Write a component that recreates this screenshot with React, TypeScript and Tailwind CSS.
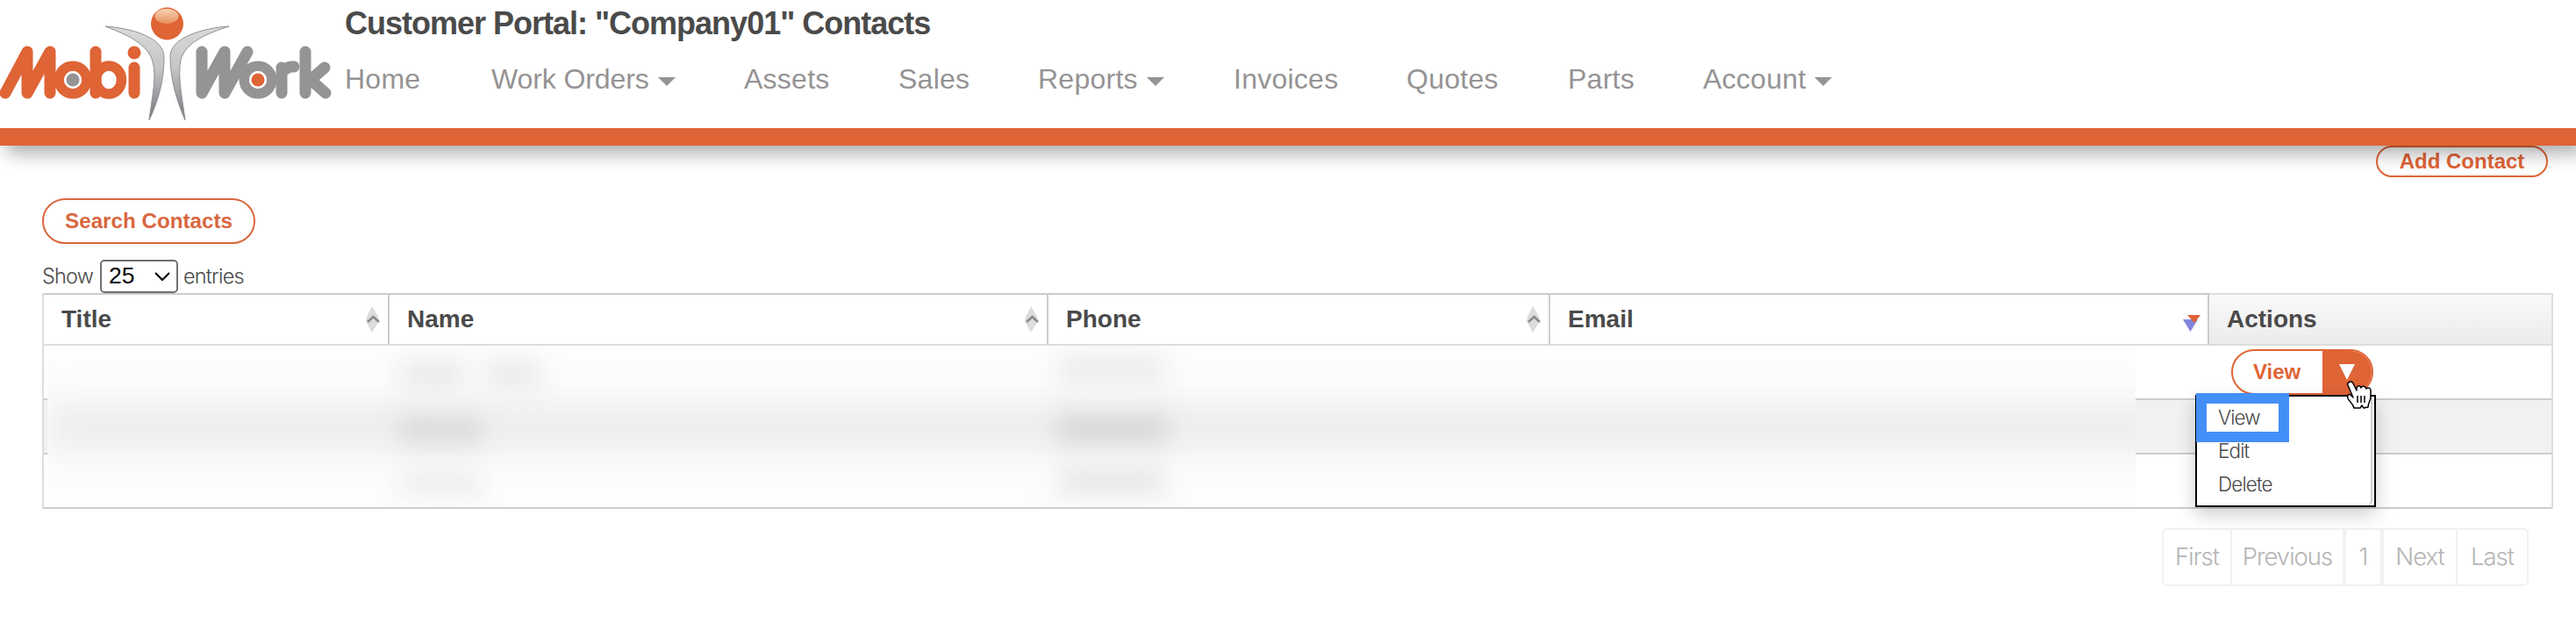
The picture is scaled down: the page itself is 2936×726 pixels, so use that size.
import React from 'react';

interface NavItem {
    label: string;
    width: string;
    menu?: boolean;
}

const navItems: NavItem[] = [
    { label: 'Home', width: 'w-[167px]' },
    { label: 'Work Orders', width: 'w-[288px] tracking-[-0.1px]', menu: true },
    { label: 'Assets', width: 'w-[176px]' },
    { label: 'Sales', width: 'w-[159px]' },
    { label: 'Reports', width: 'w-[223px]', menu: true },
    { label: 'Invoices', width: 'w-[197px]' },
    { label: 'Quotes', width: 'w-[184px]' },
    { label: 'Parts', width: 'w-[154px]' },
    { label: 'Account', width: 'w-[160px]', menu: true },
];

const Logo: React.FC = () => (
    <svg width="393" height="146" viewBox="0 0 393 146" className="shrink-0">
        <defs>
            <linearGradient id="wing" x1="0" y1="0" x2="0" y2="1">
                <stop offset="0" stopColor="#d9dadb" />
                <stop offset="0.45" stopColor="#c4c5c7" />
                <stop offset="1" stopColor="#77787b" />
            </linearGradient>
            <linearGradient id="shine" x1="0" y1="0" x2="0" y2="1">
                <stop offset="0" stopColor="#f6d3b4" />
                <stop offset="1" stopColor="#e9905f" />
            </linearGradient>
        </defs>
        <circle cx="190.500" cy="27" r="18.500" fill="#df6436" />
        <ellipse cx="190" cy="18.500" rx="13.500" ry="8.500" fill="url(#shine)" />
        <g fill="url(#wing)" stroke="#8e8f92" strokeWidth="1">
            <path d="M120 30 C150 32 188 43 187 66 C187 92 180 116 170 137 C173 112 179 88 174 70 C168 50 146 40 120 30 Z" />
            <path d="M261 30 C231 32 194 43 194 64 C194 92 202 116 211 137 C208 112 202 88 206 68 C212 48 236 38 261 30 Z" />
        </g>
        {/* "Mobi" mark */}
        <g fill="none" stroke="#df6436" strokeWidth="13" strokeLinecap="round" strokeLinejoin="round">
            <path d="M6 106 L31 59 V106 L57 59 V106" />
            <circle cx="83" cy="91" r="15.750" strokeWidth="11.500" />
            <path d="M109 59 V106" />
            <ellipse cx="124" cy="91" rx="14.500" ry="16" strokeWidth="11.500" />
            <path d="M153 77 V106" />
        </g>
        <circle cx="153" cy="60" r="7.500" fill="#df6436" />
        <circle cx="83" cy="91" r="10" fill="white" />
        <circle cx="83" cy="91" r="7.500" fill="#959394" />
        {/* "Work" mark */}
        <g fill="none" stroke="#959394" strokeWidth="13" strokeLinecap="round" strokeLinejoin="round">
            <path d="M230 59 V106 L256 59 V106 L282 59" />
            <circle cx="294" cy="91" r="15.750" strokeWidth="11.500" />
            <path d="M321 106 V77 M321 83 Q327 75 335 76" />
            <path d="M348 59 V106 M370 77 L354 91 L371 106" />
        </g>
        <circle cx="294" cy="91" r="10" fill="white" />
        <circle cx="294" cy="91" r="7.500" fill="#df6436" />
    </svg>
);

const Caret: React.FC = () => (
    <svg width="20" height="10" viewBox="0 0 20 10" className="mt-[5px] ml-[10px]">
        <path d="M0 0 H20 L10 10 Z" fill="#959394" />
    </svg>
);

const SortIcon: React.FC = () => (
    <svg width="18" height="30" viewBox="0 0 18 30">
        <path d="M8 0 L15 12 L16 17 L8 30 L1 17 L2 12 Z" fill="#dcdcdc" />
        <path d="M3 18 L9.500 12 L16 18" fill="none" stroke="#8c8a8b" strokeWidth="2.500" />
    </svg>
);

const SortedIcon: React.FC = () => (
    <svg width="20" height="20" viewBox="0 0 20 20" className="mt-[10px]">
        <path d="M0 5 H17 L8.500 19 Z" fill="#8486dc" />
        <path d="M5 0 H20 L13 9 Z" fill="#df6436" />
    </svg>
);

const PointerHand: React.FC = () => (
    <svg width="30" height="33" viewBox="0 0 30 33" className="absolute left-[170px] top-[-18px]">
        <path
            d="M3 2 C5 0 7 1 8 3 L12 11 V8 C13 5 16 5 17 8 C18 5 22 6 23 9 C25 7 28 8 28 11 V18 C28 23 25 25 25 30 L20 31 L18 28 L16 31 L9 31 C8 26 4 24 2 20 C1 16 3 14 6 17 L8 19 L2 5 C1 4 2 2 3 2 Z"
            fill="white"
            stroke="black"
            strokeWidth="1.500"
            strokeLinejoin="round"
        />
        <path d="M13 17 V25 M17 17 V25 M21 17 V25" stroke="black" strokeWidth="1.500" />
    </svg>
);

const columns = [
    { label: 'Title', width: 'w-[394px]' },
    { label: 'Name', width: 'w-[751px]' },
    { label: 'Phone', width: 'w-[572px]' },
    { label: 'Email', width: 'w-[751px]', sorted: true },
];

const pages = [
    { label: 'First', style: 'w-[80px] border-l-2 rounded-l-md' },
    { label: 'Previous', style: 'w-[130px] border-r-4' },
    { label: '1', style: 'w-[43px] border-r-4' },
    { label: 'Next', style: 'w-[84px]' },
    { label: 'Last', style: 'w-[81px] rounded-r-md' },
];

const App: React.FC = () => {
    return (
        <div className="h-[726px] w-[2936px] overflow-hidden bg-white font-['Liberation_Sans',sans-serif] text-[#4a4a4a]">
            {/* Top Header */}
            <header className="relative z-10 flex h-[166px] border-b-[20px] border-[#df6436] shadow-[8px_8px_20px_rgba(0,0,0,0.35)]">
                <Logo />
                <div className="flex flex-col">
                    <h1 className="mt-[6px] text-[36px] leading-[42px] font-bold tracking-[-1px] whitespace-nowrap">
                        Customer Portal: "Company01" Contacts
                    </h1>
                    <nav className="mt-[23px] flex text-[32px] leading-[38px] tracking-[0.25px] text-[#959394]">
                        {navItems.map((item) => (
                            <a key={item.label} className={`${item.width} flex shrink-0 items-center whitespace-nowrap`}>
                                {item.label}
                                {item.menu && <Caret />}
                            </a>
                        ))}
                    </nav>
                </div>
            </header>

            <main className="pr-[26px] pl-[48px]">
                <div className="flex h-[60px] justify-end pr-[6px]">
                    <button className="h-[36px] w-[196px] rounded-full border-2 border-[#df6436] text-2xl leading-[32px] font-bold text-[#df6436]">
                        Add Contact
                    </button>
                </div>
                <button className="block h-[52px] w-[243px] rounded-full border-2 border-[#d9673f] text-[24.200px] font-bold text-[#d9673f]">
                    Search Contacts
                </button>

                <div className="mt-[18px] flex h-[38px] items-center font-[Inter,sans-serif] text-[23.500px] font-light tracking-[-0.8px]">
                    <span className="w-[66px]">Show</span>
                    <div className="flex h-[38px] w-[89px] items-center justify-between rounded-[5px] border-2 border-[#6f6f6f] pr-[7px] pl-2 font-['Liberation_Sans',sans-serif] text-[26.500px] font-normal tracking-normal text-black">
                        25
                        <svg width="18" height="11" viewBox="0 0 18 11">
                            <path d="M1 1 L9 9 L17 1" fill="none" stroke="black" strokeWidth="2" />
                        </svg>
                    </div>
                    <span className="ml-[6px]">entries</span>
                </div>

                {/* Contacts table */}
                <section className="relative h-[246px] w-[2862px] border-x-2 border-[#ddd]">
                    <div className="flex h-[60px] text-[28px] font-bold">
                        {columns.map((column) => (
                            <div
                                key={column.label}
                                className={`${column.width} flex shrink-0 items-center justify-between border-y-2 border-r-2 border-t-[#ccc] border-r-[#ccc] border-b-[#ddd] pr-[8px] pl-[20px]`}
                            >
                                {column.label}
                                {column.sorted ? <SortedIcon /> : <SortIcon />}
                            </div>
                        ))}
                        <div className="flex grow items-center border-y-2 border-[#ddd] bg-linear-to-b from-[#fafafa] to-[#ebebeb] pl-[20px]">
                            Actions
                        </div>
                    </div>
                    <div className="h-[62px] border-b-2 border-[#ccc]" />
                    <div className="h-[62px] border-b-2 border-[#ccc] bg-[#f1f1f1]" />
                    <div className="h-[62px] border-b-2 border-[#ccc]" />

                    {/* Redacted cells */}
                    <div className="absolute top-[60px] left-[4px] h-[184px] w-[2380px] overflow-hidden bg-[#fdfdfd]">
                        <div className="absolute top-[62px] left-0 h-[60px] w-[2440px] bg-[#eeeeee] blur-[16px]" />
                        <div className="absolute top-[18px] left-[402px] h-[30px] w-[74px] bg-[#e8e8e8] blur-[14px]" />
                        <div className="absolute top-[18px] left-[500px] h-[30px] w-[62px] bg-[#e8e8e8] blur-[14px]" />
                        <div className="absolute top-[82px] left-[402px] h-[28px] w-[92px] bg-[#d9d9d9] blur-[13px]" />
                        <div className="absolute top-[142px] left-[402px] h-[28px] w-[92px] bg-[#ececec] blur-[14px]" />
                        <div className="absolute top-[10px] left-[1152px] h-[36px] w-[122px] bg-[#ececec] blur-[14px]" />
                        <div className="absolute top-[80px] left-[1152px] h-[30px] w-[124px] bg-[#d6d6d6] blur-[13px]" />
                        <div className="absolute top-[140px] left-[1152px] h-[28px] w-[122px] bg-[#e4e4e4] blur-[14px]" />
                    </div>

                    {/* Row action button */}
                    <div className="absolute top-[64px] left-[2493px] flex h-[52px] w-[162px] overflow-hidden rounded-full border-2 border-[#df6436] text-2xl font-bold">
                        <span className="flex w-[102px] items-center pl-[23px] text-[#df6436]">View</span>
                        <span className="flex grow items-center bg-[#df6436] pl-[19px]">
                            <svg width="18" height="18" viewBox="0 0 18 18">
                                <path d="M0 0 H18 L9 18 Z" fill="white" />
                            </svg>
                        </span>
                    </div>

                    {/* Row action menu */}
                    <div className="absolute top-[116px] left-[2452px] h-[128px] w-[206px] border-2 border-black bg-white font-[Inter,sans-serif] text-[22.500px] font-light tracking-[-0.9px] shadow-[0_8px_20px_rgba(0,0,0,0.2)]">
                        <div className="h-full w-[200px] rounded-b-md border-r-2 border-[#ccc] pl-[24px] leading-[38px]">
                            <div className="pt-[5px]">View</div>
                            <div>Edit</div>
                            <div>Delete</div>
                        </div>
                        <div className="absolute -top-[4px] -left-px h-[56px] w-[106px] border-[12px] border-[#448ff7]" />
                        <PointerHand />
                    </div>
                </section>

                {/* Pagination */}
                <div className="mt-[22px] flex justify-end pr-[28px] font-[Inter,sans-serif] text-[27.500px] font-light tracking-[-1px] text-[#b5b5b5]">
                    {pages.map((page) => (
                        <span
                            key={page.label}
                            className={`${page.style} flex h-[66px] items-center justify-center border-y-2 border-r-2 border-[#f1f1f1]`}
                        >
                            {page.label}
                        </span>
                    ))}
                </div>
            </main>
        </div>
    );
};

export default App;
